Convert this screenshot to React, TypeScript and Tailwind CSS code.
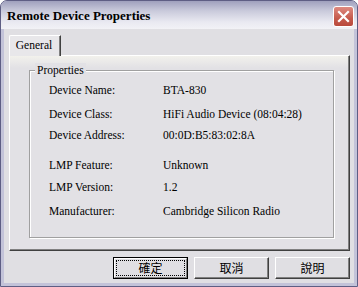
export default function App() {
  const rows = [
    { label: "Device Name:", value: "BTA-830", mt: "mt-0" },
    { label: "Device Class:", value: "HiFi Audio Device (08:04:28)", mt: "mt-[4px]" },
    { label: "Device Address:", value: "00:0D:B5:83:02:8A", mt: "mt-[1px]" },
    { label: "LMP Feature:", value: "Unknown", mt: "mt-[10px]" },
    { label: "LMP Version:", value: "1.2", mt: "mt-[2px]" },
    { label: "Manufacturer:", value: "Cambridge Silicon Radio", mt: "mt-[4px]" },
  ];

  return (
    <div className="w-[358px] h-[287px] flex flex-col rounded-t-[7px] bg-[#c3c3d9] border border-[#5e5e84] overflow-hidden font-['Liberation_Serif',serif] text-black">
      {/* title bar */}
      <div className="h-[28px] shrink-0 flex items-center justify-between pl-[6px] pr-[3px] bg-[linear-gradient(to_bottom,#9fa0bd,#c9cadb_35%,#e9e9f1_75%,#f2f2f6)]">
        <span className="text-[13px] font-bold leading-none mt-[1px]">Remote Device Properties</span>
        <div className="w-[21px] h-[21px] mt-[3px] rounded-[3px] border border-white flex items-center justify-center bg-[linear-gradient(to_bottom,#de8a80,#c55a4c_60%,#b9493c)]">
          <svg width="13" height="13" viewBox="0 0 13 13">
            <path d="M2 2 L11 11 M11 2 L2 11" stroke="#fff" strokeWidth="2.2" strokeLinecap="square" />
          </svg>
        </div>
      </div>

      {/* client */}
      <div className="flex-1 mx-[3px] mb-[3px] bg-[#e0dfe3] flex flex-col pl-[5px] pr-[4px] pt-[6px]">
        <div className="flex">
          <div className="relative z-10 w-[52px] h-[21px] -mb-[1px] bg-[#e8e7ea] border-t border-l border-white border-r border-r-[#404040] shadow-[inset_-1px_0_0_#808080] rounded-tl-[2px] flex items-center justify-center text-[11.5px] pr-[2px]">
            General
          </div>
        </div>
        <div className="h-[196px] border-t border-l border-white border-r border-b border-r-[#404040] border-b-[#404040] shadow-[inset_-1px_-1px_0_#808080] bg-[linear-gradient(to_bottom,#f2f1ec,#e2e1e5_12px)] pl-[19px] pt-[14px]">
          <div className="relative w-[305px] h-[168px] border border-[#a0a0a0] shadow-[inset_1px_1px_0_#fff,1px_1px_0_#fff] pl-[19px] pt-[10px]">
            <span className="absolute left-[5px] -top-[8px] px-[2px] bg-[#e2e1e5] text-[11.5px] leading-[14px]">
              Properties
            </span>
            {rows.map((r) => (
              <div key={r.label} className={`flex h-[20px] items-center text-[11.5px] ${r.mt}`}>
                <span className="w-[114px]">{r.label}</span>
                <span>{r.value}</span>
              </div>
            ))}
          </div>
        </div>

        <div className="flex justify-end gap-[6px] mt-[6px] font-['Noto_Sans_CJK_TC',sans-serif] text-[12px]">
          <div className="w-[75px] h-[22px] border border-black flex">
            <div className="flex-1 border-t border-l border-white border-r border-b border-r-[#808080] border-b-[#808080] bg-[#e0dfe3] flex items-center justify-center outline-1 outline-dotted outline-black -outline-offset-[3px] leading-none">
              確定
            </div>
          </div>
          <div className="w-[75px] h-[22px] border-t border-l border-white border-r border-b border-r-[#404040] border-b-[#404040] shadow-[inset_-1px_-1px_0_#808080] bg-[#e0dfe3] flex items-center justify-center leading-none">
            取消
          </div>
          <div className="w-[75px] h-[22px] border-t border-l border-white border-r border-b border-r-[#404040] border-b-[#404040] shadow-[inset_-1px_-1px_0_#808080] bg-[#e0dfe3] flex items-center justify-center leading-none">
            說明
          </div>
        </div>
      </div>
    </div>
  );
}
